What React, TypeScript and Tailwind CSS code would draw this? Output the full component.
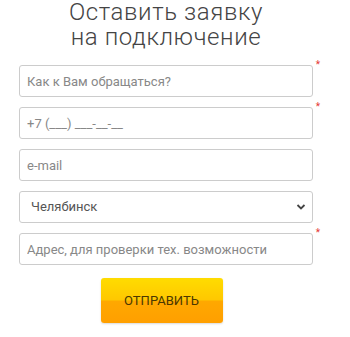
import React from 'react';

const Star = () => (
  <span className="absolute -right-[7px] -top-[5px] text-[10px] leading-none text-[#e53935]">*</span>
);

export default function App() {
  const base =
    'w-full h-[32px] rounded-[3px] border border-[#cccccc] bg-white text-[13px] text-[#555] placeholder:text-[#888] outline-none';
  const field = base + ' px-[7px]';

  return (
    <div className="w-[350px] h-[337px] bg-white font-['Roboto',sans-serif]">
      <div className="ml-[19px] w-[294px]">
        <h2 className="text-center text-[24px] leading-[25px] font-light text-[#444] tracking-[0.6px]">
          Оставить заявку
          <br />
          на подключение
        </h2>
      </div>
      <form className="mt-[15px] ml-[19px] w-[294px] flex flex-col gap-[10px]">
        <div className="relative">
          <input className={field} placeholder="Как к Вам обращаться?" />
          <Star />
        </div>
        <div className="relative">
          <input className={field} placeholder="+7 (___) ___-__-__" />
          <Star />
        </div>
        <div className="relative">
          <input className={field} placeholder="e-mail" />
        </div>
        <div className="relative">
          <select className={base + ' appearance-none pl-[11px] pr-[20px]'} defaultValue="Челябинск">
            <option>Челябинск</option>
          </select>
          <svg
            className="absolute right-[7px] top-[12px] pointer-events-none"
            width="10"
            height="8"
            viewBox="0 0 10 8"
          >
            <path d="M1.5 2l3.5 3.5L8.5 2" fill="none" stroke="#444" strokeWidth="1.8" />
          </svg>
        </div>
        <div className="relative">
          <input className={field} placeholder="Адрес, для проверки тех. возможности" />
          <Star />
        </div>
        <div className="flex justify-center pt-[3px] pr-[9px]">
          <button
            type="button"
            className="w-[122px] h-[45px] rounded-[3px] bg-[linear-gradient(to_bottom,#ffdc00_0%,#ffc800_48%,#ffa800_52%,#ff9f00_100%)] text-[13px] text-[#4a3800] shadow-[0_1px_2px_rgba(0,0,0,0.15)]"
          >
            ОТПРАВИТЬ
          </button>
        </div>
      </form>
    </div>
  );
}
